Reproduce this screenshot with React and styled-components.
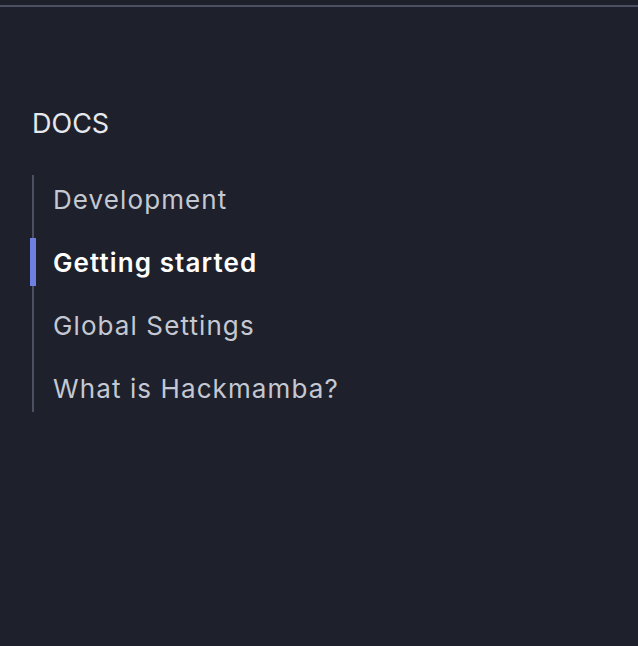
import React from "react";
import styled, { createGlobalStyle } from "styled-components";

const GlobalStyle = createGlobalStyle`
  body {
    margin: 0;
    background-color: #1e212b;
    font-family: Inter, "Noto Sans", sans-serif;
    -webkit-font-smoothing: antialiased;
  }
`;

const pages = [
  "Development",
  "Getting started",
  "Global Settings",
  "What is Hackmamba?",
];

export default function App() {
  const current = "Getting started";

  return (
    <>
      <GlobalStyle />
      <Page>
        <TopBar />
        <Sidebar>
          <Heading>DOCS</Heading>
          <NavList>
            {pages.map((page) => (
              <NavItem key={page} $active={page === current}>
                {page}
              </NavItem>
            ))}
          </NavList>
        </Sidebar>
      </Page>
    </>
  );
}

const Page = styled.div`
  min-height: 646px;
  background-color: #1e212b;
`;

const TopBar = styled.div`
  height: 5px;
  border-bottom: 2px solid #4b5163;
`;

const Sidebar = styled.nav`
  display: flex;
  flex-direction: column;
  padding: 101px 33px 0 33px;
`;

const Heading = styled.h2`
  margin: 0 0 35px -1px;
  font-size: 27px;
  line-height: 32px;
  font-weight: 400;
  color: #e6e8ee;
`;

const NavList = styled.ul`
  list-style: none;
  margin: 0 0 0 -1px;
  padding: 0;
  display: flex;
  flex-direction: column;
  gap: 15px;
  border-left: 2px solid #4b5163;
`;

const NavItem = styled.li`
  position: relative;
  height: 48px;
  display: flex;
  align-items: center;
  padding-left: 19px;
  font-size: 26px;
  letter-spacing: 1.1px;
  font-weight: ${(p) => (p.$active ? 600 : 400)};
  color: ${(p) => (p.$active ? "#ffffff" : "#c4c8d2")};

  &::before {
    content: "";
    display: ${(p) => (p.$active ? "block" : "none")};
    position: absolute;
    left: -4px;
    top: 0;
    bottom: 0;
    width: 6px;
    background-color: #6d7fe2;
  }
`;
